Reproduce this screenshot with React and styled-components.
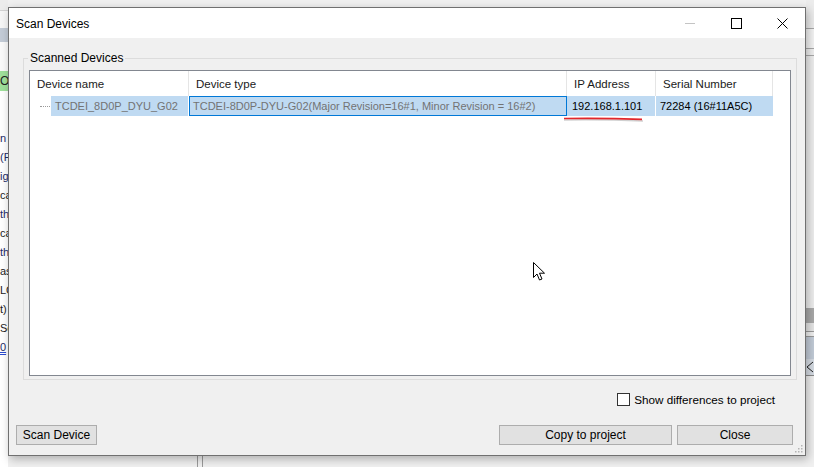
import React from "react";
import styled, { createGlobalStyle } from "styled-components";

const GlobalStyle = createGlobalStyle`
  body {
    margin: 0;
    overflow: hidden;
    font-family: "Liberation Sans", Arial, sans-serif;
  }
`;

const Desktop = styled.div`
  display: grid;
  grid-template-columns: 8px 798px 1fr;
  width: 814px;
  height: 467px;
  background: #f0f0f0;
  overflow: hidden;
`;

const Strip = styled.div`
  display: flex;
  flex-direction: column;
  overflow: hidden;
  background: ${(p) => p.$bg || "#ffffff"};
`;

const Band = styled.div`
  flex: none;
  height: ${(p) => p.$h}px;
  background: ${(p) => p.$bg};
  border-bottom: ${(p) => (p.$line ? `1px solid ${p.$line}` : "none")};
  display: flex;
  align-items: center;
  font-size: 12px;
  color: #222;
  white-space: nowrap;
  overflow: hidden;
`;

const StripText = styled.div`
  height: 19px;
  line-height: 19px;
  font-size: 11px;
  white-space: nowrap;
  color: ${(p) => p.$color || "#1b2a66"};
  text-decoration: ${(p) => (p.$link ? "underline double #2a4bd0" : "none")};
`;

const CenterColumn = styled.div`
  display: flex;
  flex-direction: column;
  padding-top: 7px;
`;

const Dialog = styled.div`
  position: relative;
  height: 449px;
  box-sizing: border-box;
  border: 1px solid #707070;
  background: #f0f0f0;
  display: flex;
  flex-direction: column;
  box-shadow: 2px 3px 9px rgba(0, 0, 0, 0.28);
  font-size: 12px;
  color: #000;
`;

const TitleBar = styled.div`
  height: 30px;
  flex: none;
  background: #ffffff;
  display: flex;
  align-items: center;
  padding-left: 7px;
`;

const Title = styled.span`
  flex: 1;
  font-size: 12px;
  padding-top: 1px;
`;

const CaptionButton = styled.div`
  width: 46px;
  height: 30px;
  display: flex;
  align-items: center;
  justify-content: center;
`;

const Body = styled.div`
  flex: 1;
  display: flex;
  flex-direction: column;
`;

const GroupBox = styled.fieldset`
  margin: 12px 8px 0 14px;
  padding: 4px 5px 3px 5px;
  border: 1px solid #dcdcdc;
  min-width: 0;
`;

const GroupLabel = styled.legend`
  padding: 0 2px;
  margin-left: -1px;
  font-size: 12px;
  line-height: 16px;
`;

const ListView = styled.div`
  position: relative;
  height: 306px;
  box-sizing: border-box;
  border: 1px solid #828790;
  background: #ffffff;
  overflow: hidden;
`;

const HeaderRow = styled.div`
  display: flex;
  height: 25px;
`;

const HeaderCell = styled.div`
  width: ${(p) => p.$w}px;
  flex: none;
  box-sizing: border-box;
  border-right: 1px solid #e5e5e5;
  padding-left: 7px;
  display: flex;
  align-items: center;
  font-size: 11.5px;
  color: #1a1a1a;
`;

const DataRow = styled.div`
  display: flex;
  height: 20px;
  font-size: 11px;
`;

const NameCell = styled.div`
  width: 159px;
  flex: none;
  display: flex;
  align-items: center;
`;

const TreeDots = styled.span`
  width: 10px;
  margin-left: 10px;
  border-top: 1px dotted #9a9a9a;
`;

const Cell = styled.div`
  flex: ${(p) => (p.$w ? "none" : 1)};
  width: ${(p) => (p.$w ? `${p.$w}px` : "auto")};
  height: 20px;
  box-sizing: border-box;
  display: flex;
  align-items: center;
  background: #bfdaf2;
  color: ${(p) => (p.$dim ? "#737373" : "#000")};
  padding-left: ${(p) => p.$pad}px;
  margin: 0 ${(p) => p.$gapR || 0}px 0 ${(p) => p.$gapL || 0}px;
  border: ${(p) => (p.$focus ? "1px solid #0078d7" : "none")};
  white-space: nowrap;
  overflow: hidden;
`;

const Underline = styled.svg`
  position: absolute;
  left: 533px;
  top: 45px;
`;

const Cursor = styled.svg`
  position: absolute;
  left: 503px;
  top: 191px;
`;

const OptionRow = styled.div`
  display: flex;
  justify-content: flex-end;
  align-items: center;
  margin-top: 11px;
  padding-right: 30px;
  height: 16px;
  gap: 4px;
  font-size: 11.7px;
`;

const CheckBox = styled.span`
  width: 13px;
  height: 13px;
  box-sizing: border-box;
  border: 1px solid #333;
  background: #fff;
`;

const ButtonRow = styled.div`
  display: flex;
  align-items: center;
  margin-top: 18px;
  padding: 0 12px 0 7px;
  gap: 5px;
`;

const Button = styled.div`
  width: ${(p) => p.$w}px;
  height: 20px;
  box-sizing: border-box;
  border: 1px solid #adadad;
  background: #e1e1e1;
  display: flex;
  align-items: center;
  justify-content: center;
  font-size: 12px;
  margin-right: ${(p) => (p.$push ? "auto" : "0")};
`;

const Grip = styled.svg`
  position: absolute;
  right: 2px;
  bottom: 2px;
`;

const BottomStrip = styled.div`
  flex: 1;
  display: flex;
  padding-left: 189px;
  gap: 4px;
`;

const VLine = styled.span`
  width: 1px;
  background: #9a9a9a;
`;

const columns = [
  { title: "Device name", w: 159 },
  { title: "Device type", w: 378 },
  { title: "IP Address", w: 89 },
  { title: "Serial Number", w: 117 },
];

const stripLines = [
  { t: "n" },
  { t: "(P" },
  { t: "ig" },
  { t: "ca", c: "#222" },
  { t: "th" },
  { t: "ca", c: "#222" },
  { t: "th" },
  { t: "as", c: "#222" },
  { t: "LC", c: "#222" },
  { t: "t)", c: "#222" },
  { t: "Sc", c: "#222" },
  { t: "0", link: true },
];

const App = () => {
  return (
    <>
      <GlobalStyle />
      <Desktop>
        <Strip>
          <Band $h={10} $bg="#ececec" $line="#d2d2d2" />
          <Band $h={17} $bg="#f6f6f6" />
          <Band $h={14} $bg="#c3cbd6" />
          <Band $h={29} $bg="#fafafa" />
          <Band $h={20} $bg="#9fe09b">O</Band>
          <Band $h={38} $bg="#ffffff" />
          {stripLines.map((l, i) => (
            <StripText key={i} $color={l.c} $link={l.link}>
              {l.t}
            </StripText>
          ))}
        </Strip>

        <CenterColumn>
          <Dialog>
            <TitleBar>
              <Title>Scan Devices</Title>
              <CaptionButton>
                <svg width="10" height="10">
                  <line x1="0" y1="5.5" x2="10" y2="5.5" stroke="#c4c4c4" />
                </svg>
              </CaptionButton>
              <CaptionButton>
                <svg width="11" height="11">
                  <rect x="0.5" y="0.5" width="10" height="10" fill="none" stroke="#000" />
                </svg>
              </CaptionButton>
              <CaptionButton>
                <svg width="11" height="11">
                  <path d="M0.5 0.5 L10.5 10.5 M10.5 0.5 L0.5 10.5" stroke="#000" />
                </svg>
              </CaptionButton>
            </TitleBar>

            <Body>
              <GroupBox>
                <GroupLabel>Scanned Devices</GroupLabel>
                <ListView>
                  <HeaderRow>
                    {columns.map((c) => (
                      <HeaderCell key={c.title} $w={c.w}>
                        {c.title}
                      </HeaderCell>
                    ))}
                  </HeaderRow>
                  <DataRow>
                    <NameCell>
                      <TreeDots />
                      <Cell $dim $pad={4} $gapL={1} $gapR={1}>
                        TCDEI_8D0P_DYU_G02
                      </Cell>
                    </NameCell>
                    <Cell $w={378} $dim $focus $pad={3}>
                      TCDEI-8D0P-DYU-G02(Major Revision=16#1, Minor Revision = 16#2)
                    </Cell>
                    <Cell $w={88} $pad={5} $gapR={1}>
                      192.168.1.101
                    </Cell>
                    <Cell $w={117} $pad={4}>
                      72284 (16#11A5C)
                    </Cell>
                  </DataRow>

                  <Underline width="84" height="8">
                    <path d="M1 4 Q40 3.4 80 5" stroke="#b0b0b0" strokeWidth="1.5" fill="none" opacity="0.6" />
                    <path d="M1 2.5 Q40 1.8 79 3.4" stroke="#e2262b" strokeWidth="1.7" fill="none" />
                  </Underline>

                  <Cursor width="13" height="20">
                    <path
                      d="M0.5 0.5 L0.5 15.5 L4 12 L6.5 18 L9 17 L6.5 11.2 L11.5 11.2 Z"
                      fill="#fff"
                      stroke="#000"
                      strokeWidth="1"
                      strokeLinejoin="miter"
                    />
                  </Cursor>
                </ListView>
              </GroupBox>

              <OptionRow>
                <CheckBox />
                <span>Show differences to project</span>
              </OptionRow>

              <ButtonRow>
                <Button $w={81} $push>
                  Scan Device
                </Button>
                <Button $w={173}>Copy to project</Button>
                <Button $w={116}>Close</Button>
              </ButtonRow>
            </Body>

            <Grip width="9" height="9">
              {[
                [7, 1],
                [7, 4],
                [4, 4],
                [7, 7],
                [4, 7],
                [1, 7],
              ].map(([x, y], i) => (
                <rect key={i} x={x} y={y} width="1.5" height="1.5" fill="#b4b4b4" />
              ))}
            </Grip>
          </Dialog>
          <BottomStrip>
            <VLine />
            <VLine />
          </BottomStrip>
        </CenterColumn>

        <Strip $bg="#f0f0f0">
          <Band $h={28} $bg="#ececec" $line="#a8a8a8" />
          <Band $h={19} $bg="#f4f4f4" $line="#a8a8a8" />
          <Band $h={6} $bg="#f0f0f0" $line="#a8a8a8" />
          <Band $h={252} $bg="#eeeeee" />
          <Band $h={15} $bg="#a9a9a9" />
          <Band $h={8} $bg="#e6e6e6" $line="#9a9a9a" />
          <Band $h={4} $bg="#f0f0f0" $line="#9a9a9a" />
          <Band $h={22} $bg="#c3ccd8" />
          <Band $h={16} $bg="#d6dce4" $line="#8a8a8a">
            <svg width="8" height="12">
              <path d="M7 1 L1 6 L7 11" stroke="#222" fill="none" />
            </svg>
          </Band>
        </Strip>
      </Desktop>
    </>
  );
};

export default App;
